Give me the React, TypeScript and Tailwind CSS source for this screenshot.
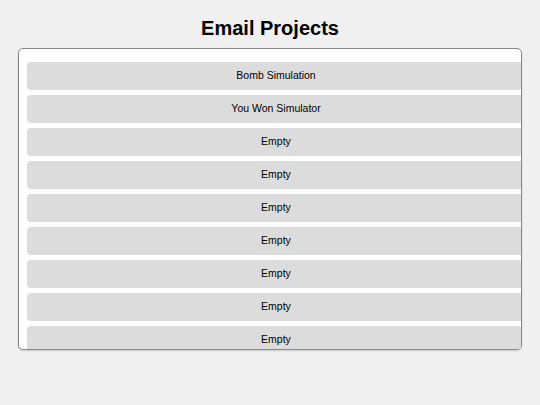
const projects = [
  'Bomb Simulation',
  'You Won Simulator',
  'Empty',
  'Empty',
  'Empty',
  'Empty',
  'Empty',
  'Empty',
  'Empty',
];

export default function App() {
  return (
    <div className="min-h-screen bg-[#f0f0f0] pt-[16px] font-['Liberation_Sans',Arial,sans-serif] text-black">
      <h1 className="mb-[8px] text-center text-[20px] font-bold leading-[24px]">Email Projects</h1>
      <div className="mx-[18px] h-[302px] overflow-hidden rounded-[5px] border border-[#888888] bg-white px-[8px] pt-[13px] shadow-[0_1px_2px_rgba(0,0,0,0.15)]">
        <div className="flex flex-col gap-[5px]">
          {projects.map((name, i) => (
            <div
              key={i}
              className="flex h-[28px] w-[calc(100%+12px)] shrink-0 items-center justify-center rounded-[4px] bg-[#dcdcdc] text-[10.5px] text-black"
            >
              {name}
            </div>
          ))}
        </div>
      </div>
    </div>
  );
}
